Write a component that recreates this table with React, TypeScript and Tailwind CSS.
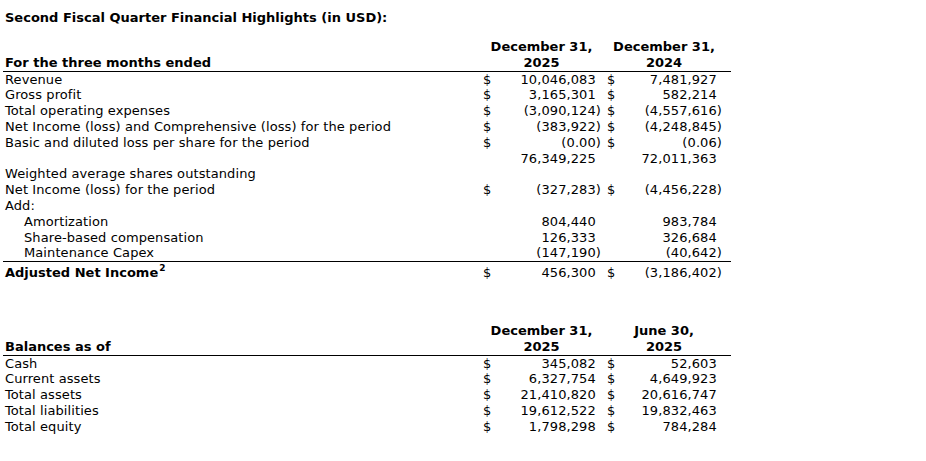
import React from "react";

const ROW = "grid grid-cols-[477px_123px_128px] leading-[15.8px]";

type Val = { d?: boolean; v: string } | null;

function Num({ v }: { v: string }) {
  const neg = v.startsWith("(");
  return (
    <span className="whitespace-pre">
      {v}
      {!neg && <span className="invisible">)</span>}
    </span>
  );
}

function Cell1({ val }: { val: Val }) {
  return (
    <div className="flex justify-between pl-[3px] pr-[2px]">
      <span>{val && val.d ? "$" : ""}</span>
      {val ? <Num v={val.v} /> : <span />}
    </div>
  );
}

function Cell2({ val }: { val: Val }) {
  return (
    <div className="flex justify-between pl-[4px] pr-[9px]">
      <span>{val && val.d ? "$" : ""}</span>
      {val ? <Num v={val.v} /> : <span />}
    </div>
  );
}

function Row({
  label,
  a,
  b,
  indent,
  bold,
  sup,
  border,
}: {
  label: string;
  a: Val;
  b: Val;
  indent?: boolean;
  bold?: boolean;
  sup?: string;
  border?: boolean;
}) {
  return (
    <div className={ROW + (border ? " border-b border-black" : "") + (bold ? " pt-[3px]" : "")}>
      <div
        className={
          (indent ? "pl-[21px]" : "pl-[2px]") +
          (bold ? " font-bold tracking-normal" : "") +
          " whitespace-nowrap"
        }
      >
        {label}
        {sup && (
          <span className="inline-block align-top text-[9px] font-bold leading-[9px] ml-[1px] mt-[-1px]">{sup}</span>
        )}
      </div>
      <Cell1 val={a} />
      <Cell2 val={b} />
    </div>
  );
}

function Header({ label, h1, h2 }: { label: string; h1: [string, string]; h2: [string, string] }) {
  return (
    <div className={ROW + " border-b border-black font-bold tracking-normal"}>
      <div className="pl-[2px] flex items-end whitespace-nowrap">{label}</div>
      <div className="text-center flex flex-col">
        <span>{h1[0]}</span>
        <span>{h1[1]}</span>
      </div>
      <div className="text-center flex flex-col pr-[6px]">
        <span>{h2[0]}</span>
        <span>{h2[1]}</span>
      </div>
    </div>
  );
}

export default function App() {
  return (
    <div
      className="w-[926px] h-[461px] bg-white text-black text-[13px] tracking-[0.09px] overflow-hidden"
      style={{ fontFamily: 'Verdana, "DejaVu Sans", sans-serif' }}
    >
      <div className="pt-[10px] pl-[5px] font-bold tracking-normal leading-[16px]">
        Second Fiscal Quarter Financial Highlights (in USD):
      </div>

      <div className="ml-[3px] mt-[13px] w-[728px]">
        <Header label="For the three months ended" h1={["December 31,", "2025"]} h2={["December 31,", "2024"]} />
        <Row label="Revenue" a={{ d: true, v: "10,046,083" }} b={{ d: true, v: "7,481,927" }} />
        <Row label="Gross profit" a={{ d: true, v: "3,165,301" }} b={{ d: true, v: "582,214" }} />
        <Row label="Total operating expenses" a={{ d: true, v: "(3,090,124)" }} b={{ d: true, v: "(4,557,616)" }} />
        <Row
          label="Net Income (loss) and Comprehensive (loss) for the period"
          a={{ d: true, v: "(383,922)" }}
          b={{ d: true, v: "(4,248,845)" }}
        />
        <Row label="Basic and diluted loss per share for the period" a={{ d: true, v: "(0.00)" }} b={{ d: true, v: "(0.06)" }} />
        <Row label="" a={{ v: "76,349,225" }} b={{ v: "72,011,363" }} />
        <Row label="Weighted average shares outstanding" a={null} b={null} />
        <Row label="Net Income (loss) for the period" a={{ d: true, v: "(327,283)" }} b={{ d: true, v: "(4,456,228)" }} />
        <Row label="Add:" a={null} b={null} />
        <Row label="Amortization" indent a={{ v: "804,440" }} b={{ v: "983,784" }} />
        <Row label="Share-based compensation" indent a={{ v: "126,333" }} b={{ v: "326,684" }} />
        <Row label="Maintenance Capex" indent border a={{ v: "(147,190)" }} b={{ v: "(40,642)" }} />
        <Row label="Adjusted Net Income" bold sup="2" a={{ d: true, v: "456,300" }} b={{ d: true, v: "(3,186,402)" }} />
      </div>

      <div className="ml-[3px] mt-[42px] w-[728px]">
        <Header label="Balances as of" h1={["December 31,", "2025"]} h2={["June 30,", "2025"]} />
        <Row label="Cash" a={{ d: true, v: "345,082" }} b={{ d: true, v: "52,603" }} />
        <Row label="Current assets" a={{ d: true, v: "6,327,754" }} b={{ d: true, v: "4,649,923" }} />
        <Row label="Total assets" a={{ d: true, v: "21,410,820" }} b={{ d: true, v: "20,616,747" }} />
        <Row label="Total liabilities" a={{ d: true, v: "19,612,522" }} b={{ d: true, v: "19,832,463" }} />
        <Row label="Total equity" a={{ d: true, v: "1,798,298" }} b={{ d: true, v: "784,284" }} />
      </div>
    </div>
  );
}
